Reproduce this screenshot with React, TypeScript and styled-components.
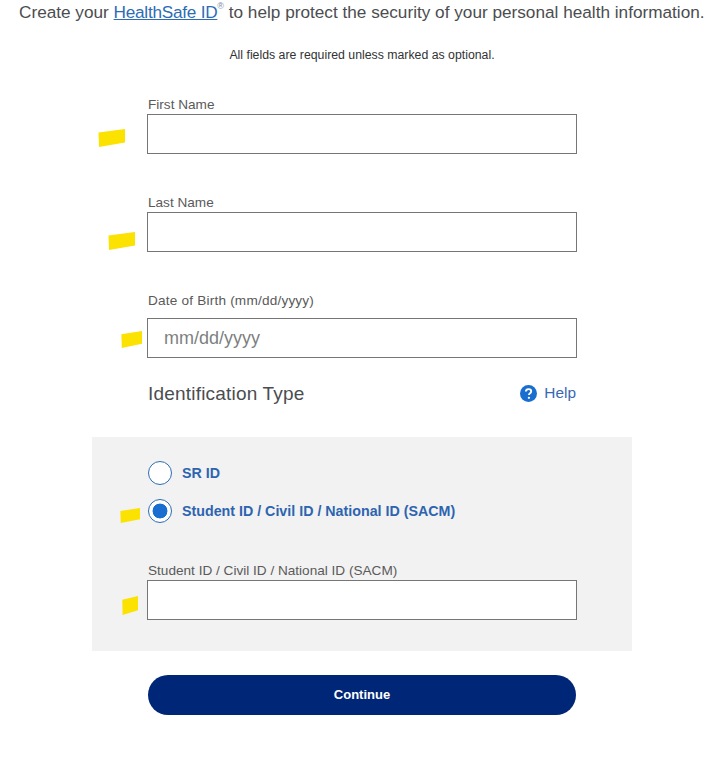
import React from 'react';
import styled, { createGlobalStyle } from 'styled-components';

const GlobalStyle = createGlobalStyle`
  html, body {
    margin: 0;
    padding: 0;
    background: #fff;
  }
  body {
    font-family: "Liberation Sans", Arial, sans-serif;
  }
`;

type MarkProps = { left: number; top: number; width: number; height: number };

// the yellow scribbles somebody put on the screenshot
const HighlightMark = ({ left, top, width, height }: MarkProps) => (
  <Mark $left={left} $top={top} width={width} height={height} viewBox="0 0 27 18" preserveAspectRatio="none">
    <polygon points="0.5,3.5 27,0 27,13.5 1,18" fill="#fbe200" />
  </Mark>
);

const App = () => {
  return (
    <Page>
      <GlobalStyle />
      <Intro>
        Create your <IntroLink href="#">HealthSafe ID</IntroLink>
        <Reg>®</Reg> to help protect the security of your personal health information.
      </Intro>
      <Required>All fields are required unless marked as optional.</Required>

      <Form>
        <Column>
          <Field $bottom={41}>
            <Label>First Name</Label>
            <InputWrap>
              <HighlightMark left={-49} top={15} width={27} height={18} />
              <TextInput type="text" />
            </InputWrap>
          </Field>
          <Field $bottom={41}>
            <Label>Last Name</Label>
            <InputWrap>
              <HighlightMark left={-39} top={20} width={27} height={18} />
              <TextInput type="text" />
            </InputWrap>
          </Field>
          <Field $bottom={24}>
            <Label $bottom={9} $tracking={0.2}>Date of Birth (mm/dd/yyyy)</Label>
            <InputWrap>
              <HighlightMark left={-26} top={13} width={21} height={17} />
              <TextInput type="text" placeholder="mm/dd/yyyy" />
            </InputWrap>
          </Field>
          <TypeRow>
            <TypeTitle>Identification Type</TypeTitle>
            <HelpLink href="#">
              <svg width="17" height="17" viewBox="0 0 17 17">
                <circle cx="8.5" cy="8.5" r="8.5" fill="#196ecf" />
                <path
                  d="M5.9 6.6c0-1.5 1.1-2.5 2.7-2.5s2.6.9 2.6 2.2c0 1-.5 1.6-1.4 2.2-.6.4-.8.7-.8 1.3v.3"
                  fill="none"
                  stroke="#fff"
                  strokeWidth="1.9"
                />
                <circle cx="8.9" cy="12.8" r="1.15" fill="#fff" />
              </svg>
              Help
            </HelpLink>
          </TypeRow>
        </Column>

        <Panel>
          <RadioRow>
            <RadioCircle />
            <RadioLabel>SR ID</RadioLabel>
          </RadioRow>
          <RadioRow>
            <HighlightMark left={-28} top={9} width={20} height={15} />
            <RadioCircle $checked />
            <RadioLabel>Student ID / Civil ID / National ID (SACM)</RadioLabel>
          </RadioRow>
          <PanelField>
            <Label>Student ID / Civil ID / National ID (SACM)</Label>
            <InputWrap>
              <HighlightMark left={-25} top={16} width={16} height={19} />
              <TextInput type="text" />
            </InputWrap>
          </PanelField>
        </Panel>

        <Column>
          <ContinueButton type="button">Continue</ContinueButton>
        </Column>
      </Form>
    </Page>
  );
};

const Page = styled.div`
  width: 717px;
  height: 761px;
  overflow: hidden;
  background: #fff;
`;

const Intro = styled.p`
  margin: 0;
  padding: 2px 0 0 19px;
  font-size: 17.2px;
  line-height: 20px;
  white-space: nowrap;
  color: #4b4d4f;
`;

const IntroLink = styled.a`
  letter-spacing: -0.25px;
  color: #2d6cb5;
  text-decoration: underline;
`;

const Reg = styled.sup`
  font-size: 9px;
  line-height: 0;
  color: #7a8ba0;
  vertical-align: 9px;
`;

const Required = styled.p`
  margin: 25px 0 0;
  width: 724px;
  text-align: center;
  font-size: 12.3px;
  line-height: 16px;
  color: #333;
`;

const Form = styled.form`
  display: flex;
  flex-direction: column;
  margin-top: 34px;
`;

const Column = styled.div`
  margin-left: 148px;
  width: 428px;
`;

const Field = styled.div<{ $bottom: number }>`
  margin-bottom: ${(p) => p.$bottom}px;
`;

const Label = styled.label<{ $bottom?: number; $tracking?: number }>`
  display: block;
  height: 16px;
  margin-bottom: ${(p) => p.$bottom ?? 1}px;
  font-size: 13.6px;
  line-height: 16px;
  letter-spacing: ${(p) => p.$tracking ?? 0}px;
  white-space: nowrap;
  color: #5a5a5a;
`;

const InputWrap = styled.div`
  position: relative;
  margin-left: -1px;
  width: 430px;
`;

const Mark = styled.svg<{ $left: number; $top: number }>`
  position: absolute;
  left: ${(p) => p.$left}px;
  top: ${(p) => p.$top}px;
`;

const TextInput = styled.input`
  display: block;
  box-sizing: border-box;
  width: 100%;
  height: 40px;
  padding: 0 16px;
  border: 1px solid #767676;
  border-radius: 0;
  background: #fff;
  font-family: inherit;
  font-size: 18px;
  color: #333;
  outline: none;

  &::placeholder {
    color: #7d7f81;
    opacity: 1;
  }
`;

const TypeRow = styled.div`
  display: flex;
  justify-content: space-between;
  align-items: center;
  height: 24px;
  margin-bottom: 31px;
`;

const TypeTitle = styled.h2`
  margin: 0;
  font-size: 19px;
  font-weight: 400;
  letter-spacing: 0.2px;
  color: #4b4d4f;
`;

const HelpLink = styled.a`
  display: flex;
  align-items: center;
  gap: 7px;
  padding-bottom: 2px;
  font-size: 15.4px;
  color: #3a68b0;
  text-decoration: none;
`;

const Panel = styled.div`
  display: flex;
  flex-direction: column;
  gap: 14px;
  box-sizing: border-box;
  width: 540px;
  height: 214px;
  margin-left: 92px;
  margin-bottom: 24px;
  padding: 24px 55px 0 56px;
  background: #f2f2f2;
`;

const RadioRow = styled.div`
  position: relative;
  display: flex;
  align-items: center;
  gap: 10px;
  height: 24px;
`;

const RadioCircle = styled.span<{ $checked?: boolean }>`
  box-sizing: border-box;
  flex: none;
  width: 24px;
  height: 24px;
  border: 1.5px solid #2d6cb5;
  border-radius: 50%;
  background: ${(p) =>
    p.$checked ? 'radial-gradient(circle, #196ecf 0 7.2px, #fff 7.7px)' : '#fff'};
`;

const RadioLabel = styled.span`
  font-size: 14.25px;
  font-weight: 700;
  color: #2d64b0;
`;

const PanelField = styled.div`
  margin-top: 26px;
`;

const ContinueButton = styled.button`
  display: block;
  width: 100%;
  height: 40px;
  padding: 0 0 2px;
  border: none;
  border-radius: 20px;
  background: #002677;
  color: #fff;
  font-family: inherit;
  font-size: 13px;
  font-weight: 700;
`;

export default App;
